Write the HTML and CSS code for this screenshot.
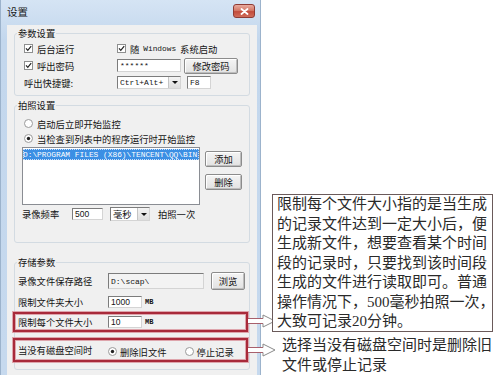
FILE: index.html
```html
<!DOCTYPE html>
<html lang="zh-CN">
<head>
<meta charset="utf-8">
<title>设置</title>
<link rel="stylesheet" href="styles.css">
</head>
<body>
<div class="stage">
  <div class="window">
    <div class="titlebar">
      <span class="title">设置</span>
      <span class="close"><svg width="9" height="7" viewBox="0 0 9 7"><path d="M1.5 1 L7.5 6 M7.5 1 L1.5 6" stroke="#fff" stroke-width="1.8" stroke-linecap="round"/></svg></span>
    </div>
    <div class="client">
      <div class="group g1">
        <span class="gtitle">参数设置</span>
        <div class="gbody b1">
          <div class="row">
            <span class="chk col1"><svg class="cb" viewBox="0 0 9 9"><rect x="0.5" y="0.5" width="8" height="8" fill="#fff" stroke="#8e8f8f"/><path d="M2 4.4 L3.8 6.4 L7.2 2.2" fill="none" stroke="#222" stroke-width="1.2"/></svg>后台运行</span>
            <span class="chk"><svg class="cb" viewBox="0 0 9 9"><rect x="0.5" y="0.5" width="8" height="8" fill="#fff" stroke="#8e8f8f"/><path d="M2 4.4 L3.8 6.4 L7.2 2.2" fill="none" stroke="#222" stroke-width="1.2"/></svg>随<span class="lat">Windows</span> 系统启动</span>
          </div>
          <div class="row">
            <span class="chk col1"><svg class="cb" viewBox="0 0 9 9"><rect x="0.5" y="0.5" width="8" height="8" fill="#fff" stroke="#8e8f8f"/><path d="M2 4.4 L3.8 6.4 L7.2 2.2" fill="none" stroke="#222" stroke-width="1.2"/></svg>呼出密码</span>
            <span class="edit w-pass mono">******</span>
            <span class="btn b-modify">修改密码</span>
          </div>
          <div class="row">
            <span class="col1">呼出快捷键:</span>
            <span class="combo w-hot"><span class="ctext mono">Ctrl+Alt+</span><span class="drop"></span></span>
            <span class="edit w-f8 mono">F8</span>
          </div>
        </div>
      </div>

      <div class="group g2">
        <span class="gtitle">拍照设置</span>
        <div class="gbody b2">
          <div class="rrow"><svg class="rd" viewBox="0 0 9 9"><circle cx="4.5" cy="4.5" r="4" fill="#fff" stroke="#9a9a9a"/></svg>启动后立即开始监控</div>
          <div class="rrow"><svg class="rd" viewBox="0 0 9 9"><circle cx="4.5" cy="4.5" r="4" fill="#fff" stroke="#9a9a9a"/><circle cx="4.5" cy="4.5" r="1.7" fill="#222"/></svg>当检查到列表中的程序运行时开始监控</div>
          <div class="listarea">
            <div class="list"><div class="item">D:\PROGRAM FILES (X86)\TENCENT\QQ\BIN</div></div>
            <div class="btncol">
              <span class="btn b-list">添加</span>
              <span class="btn b-list">删除</span>
            </div>
          </div>
          <div class="frow">
            <span class="flbl">录像频率</span>
            <span class="edit w-freq num">500</span>
            <span class="combo w-unit"><span class="ctext">毫秒</span><span class="drop"></span></span>
            <span class="fafter">拍照一次</span>
          </div>
        </div>
      </div>

      <div class="group g3">
        <span class="gtitle">存储参数</span>
        <div class="gbody b3">
          <div class="srow r-path">
            <span class="slbl">录像文件保存路径</span>
            <span class="edit ro w-path mono">D:\scap\</span>
            <span class="btn b-browse">浏览</span>
          </div>
          <div class="srow r-folder">
            <span class="slbl">限制文件夹大小</span>
            <span class="edit w-size num">1000</span>
            <span class="mb">MB</span>
          </div>
          <div class="srow r-file hl">
            <span class="slbl">限制每个文件大小</span>
            <span class="edit w-size num">10</span>
            <span class="mb">MB</span>
          </div>
          <div class="srow r-disk hl">
            <span class="slbl">当没有磁盘空间时</span>
            <span class="ropt o1"><svg class="rd" viewBox="0 0 9 9"><circle cx="4.5" cy="4.5" r="4" fill="#fff" stroke="#9a9a9a"/><circle cx="4.5" cy="4.5" r="1.7" fill="#222"/></svg>删除旧文件</span>
            <span class="ropt o2"><svg class="rd" viewBox="0 0 9 9"><circle cx="4.5" cy="4.5" r="4" fill="#fff" stroke="#9a9a9a"/></svg>停止记录</span>
          </div>
        </div>
      </div>
    </div>
  </div>

  <svg class="arrow a1" viewBox="0 0 28 14"><path d="M0 4.5 H15 V1 L27 7 L15 13 V9.5 H0 Z" fill="#fff" stroke="none"/><path d="M0 4.5 H15 M0 9.5 H15" stroke="#a8606c" stroke-width="1"/><path d="M15 4.5 V1 L27 7 L15 13 V9.5" fill="none" stroke="#8a8a8a" stroke-width="1"/></svg>
  <svg class="arrow a2" viewBox="0 0 28 14"><path d="M0 4.5 H15 V1 L27 7 L15 13 V9.5 H0 Z" fill="#fff" stroke="none"/><path d="M0 4.5 H15 M0 9.5 H15" stroke="#a8606c" stroke-width="1"/><path d="M15 4.5 V1 L27 7 L15 13 V9.5" fill="none" stroke="#8a8a8a" stroke-width="1"/></svg>

  <div class="note">
    <div>限制每个文件大小指的是当生成</div>
    <div>的记录文件达到一定大小后，便</div>
    <div>生成新文件，想要查看某个时间</div>
    <div>段的记录时，只要找到该时间段</div>
    <div>生成的文件进行读取即可。普通</div>
    <div>操作情况下，500毫秒拍照一次，</div>
    <div>大致可记录20分钟。</div>
  </div>
  <div class="note2">
    <div>选择当没有磁盘空间时是删除旧</div>
    <div>文件或停止记录</div>
  </div>
</div>
</body>
</html>
```

FILE: styles.css
```css
* { box-sizing: border-box; }
html, body { margin: 0; padding: 0; }
body {
  width: 500px;
  height: 375px;
  overflow: hidden;
  background: #fff;
  font-family: "Noto Sans CJK SC", sans-serif;
  color: #141414;
}
.stage { position: relative; width: 500px; height: 375px; }

.window {
  width: 261px;
  height: 375px;
  background: linear-gradient(#d5e4f4, #c3d7ed 40px, #c6d9ee);
  border-left: 1px solid #9cb3cc;
  border-right: 1px solid #9cb3cc;
  padding: 0 3px 0 6px;
  display: flex;
  flex-direction: column;
}
.titlebar {
  height: 25px;
  flex: none;
  display: flex;
  justify-content: space-between;
  align-items: flex-start;
}
.title {
  font-size: 10.5px;
  line-height: 12px;
  margin-top: 6px;
  color: #1a1a1a;
}
.close {
  width: 22px;
  height: 14px;
  margin-top: 4px;
  margin-right: 2px;
  border: 1px solid #8e3b34;
  border-radius: 3px;
  background: linear-gradient(#e9ab9e, #d47a68 45%, #c24c3c 55%, #d06d5a);
  display: flex;
  align-items: center;
  justify-content: center;
}
.close svg { display: block; }

.client {
  flex: 1;
  background: #f0f0f0;
  padding: 8px 7px 0 7px;
  font-size: 9.3px;
}

.group {
  border: 1px solid #d3dbe2;
  border-radius: 3px;
}
.gtitle {
  display: block;
  width: max-content;
  margin: -7px 0 0 2px;
  padding: 0 1px;
  background: #f0f0f0;
  line-height: 12px;
}
.g2 { margin-top: 9px; }
.g3 { margin-top: 19px; }

.b1 { padding: 1px 0 4px 9px; }
.b2 { padding: 5px 0 21px 7px; }
.b3 { padding: 4px 4px 8px 3px; }

.row { display: flex; align-items: center; height: 17px; }
.col1 { width: 93px; flex: none; }
.chk { display: flex; align-items: center; gap: 4px; }
.cb { width: 9px; height: 9px; flex: none; display: block; }
.rd { width: 9px; height: 9px; flex: none; display: block; }
.lat { font-family: "Liberation Mono", monospace; font-size: 7.8px; }
.mono { font-family: "Liberation Mono", monospace; font-size: 8px; }
.num { font-family: "Liberation Sans", sans-serif; font-size: 8.5px; }

.edit {
  display: flex;
  align-items: center;
  height: 13px;
  padding: 0 2px;
  background: #fff;
  border: 1px solid;
  border-color: #7c7c7c #d4d4d4 #d4d4d4 #7c7c7c;
  flex: none;
  white-space: nowrap;
  overflow: hidden;
}
.edit.ro { background: #f3f3f3; }
.w-pass { width: 64px; }
.w-f8 { width: 24px; margin-left: 6px; }

.btn {
  display: flex;
  align-items: center;
  justify-content: center;
  flex: none;
  background: linear-gradient(#f4f4f4, #e2e2e2);
  border: 1px solid #8c8c8c;
  border-radius: 2px;
  box-shadow: inset 1px 1px #fff, inset -1px -1px #bdbdbd;
}
.b-modify { width: 54px; height: 16px; margin-left: 3px; }

.combo {
  display: flex;
  align-items: center;
  flex: none;
  background: #fff;
  border: 1px solid;
  border-color: #7c7c7c #d4d4d4 #d4d4d4 #7c7c7c;
  padding-left: 2px;
}
.ctext { flex: 1; white-space: nowrap; overflow: hidden; }
.drop {
  width: 12px;
  align-self: stretch;
  margin: 0;
  flex: none;
  background: linear-gradient(#f3f3f3, #dedede);
  border-left: 1px solid #c4c4c4;
  display: flex;
  align-items: center;
  justify-content: center;
}
.drop::after {
  content: "";
  width: 0;
  height: 0;
  border-left: 3px solid transparent;
  border-right: 3px solid transparent;
  border-top: 3px solid #111;
}
.w-hot { width: 64px; height: 13px; }
.w-unit { width: 40px; height: 14px; margin-left: 7px; }

.rrow { display: flex; align-items: center; gap: 4px; height: 15px; padding-left: 2px; }

.listarea { display: flex; margin-top: 1px; height: 58px; }
.list {
  width: 178px;
  height: 58px;
  flex: none;
  background: #fff;
  border: 1px solid #8a8d93;
  padding: 1px 0;
}
.item {
  height: 11px;
  background: #3b8fe4;
  color: #fff;
  font-family: "Liberation Mono", monospace;
  font-size: 7.85px;
  line-height: 11px;
  white-space: nowrap;
  overflow: hidden;
  outline: 1px dotted #c9defa;
  outline-offset: -1px;
}
.btncol { display: flex; flex-direction: column; gap: 7px; margin-left: 5px; padding-top: 4px; }
.b-list { width: 37px; height: 16px; }

.frow { display: flex; align-items: center; height: 14px; margin-top: 2px; }
.flbl { width: 50px; flex: none; }
.w-freq { width: 31px; height: 12px; }
.fafter { margin-left: 8px; }

.srow { display: flex; align-items: center; height: 18px; position: relative; }
.slbl { width: 90px; flex: none; }
.w-path { width: 96px; height: 16px; }
.b-browse { width: 34px; height: 18px; margin-left: 7px; }
.r-folder { margin-top: 3px; }
.r-file { margin-top: 2px; }
.r-disk { margin-top: 8px; height: 22px; }
.w-size { width: 34px; height: 12px; }
.mb {
  margin-left: 3px;
  font-family: "Liberation Mono", monospace;
  font-weight: bold;
  font-size: 7px;
}
.ropt { display: flex; align-items: center; gap: 3px; }
.o1 { margin-top: 3px; }
.o2 { margin-left: 18px; margin-top: 3px; }

.hl::after {
  content: "";
  position: absolute;
  left: -5px;
  right: -3px;
  top: -1px;
  bottom: -1px;
  border: 2px solid #a82a3a;
  box-shadow: 0 0 0 1px rgba(216, 140, 150, 0.75), inset 0 0 0 1px rgba(216, 140, 150, 0.75);
  pointer-events: none;
}

.arrow { position: absolute; left: 248px; width: 28px; height: 14px; }
.a1 { top: 314px; }
.a2 { top: 343px; }

.note {
  position: absolute;
  left: 272px;
  top: 194px;
  width: 221px;
  height: 138px;
  border: 1px solid #6a5a5a;
  background: #fff;
  padding-left: 4px;
  font-family: "Liberation Serif", "Noto Sans CJK SC", sans-serif;
  font-size: 15px;
  line-height: 19.5px;
  color: #2a2a2a;
  white-space: nowrap;
}
.note2 {
  position: absolute;
  left: 282px;
  top: 335px;
  font-family: "Liberation Serif", "Noto Sans CJK SC", sans-serif;
  font-size: 15px;
  line-height: 20px;
  color: #2a2a2a;
  white-space: nowrap;
}
```
